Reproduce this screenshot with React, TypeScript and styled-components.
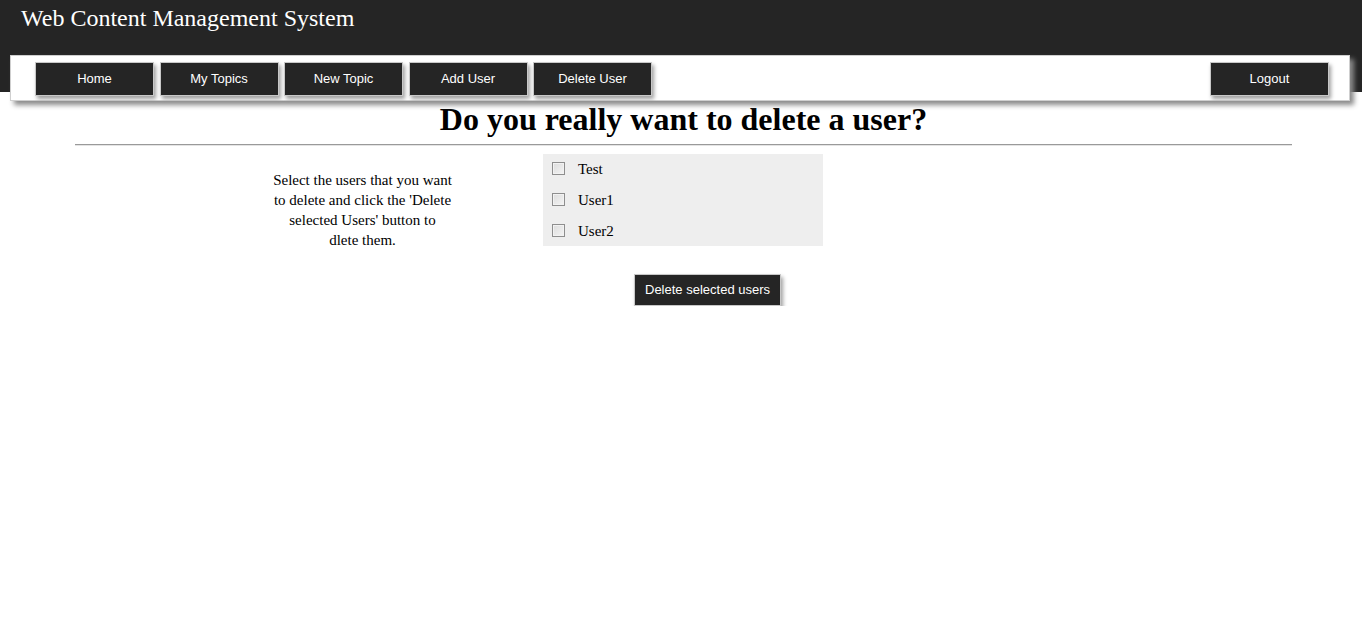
import React from "react";
import styled, { createGlobalStyle } from "styled-components";

const Global = createGlobalStyle`
  html, body { margin: 0; padding: 0; background: #fff; }
  body { font-family: "Liberation Serif", "Times New Roman", serif; color: #000; }
`;

const Header = styled.header`
  background: #252525;
  padding-top: 4px;
  height: 88px;
`;

const SiteTitle = styled.div`
  color: #fff;
  font-family: "Liberation Serif", "Times New Roman", serif;
  font-size: 24px;
  line-height: 28px;
  padding-left: 21px;
`;

const Nav = styled.nav`
  margin: 23px 0 0 10px;
  width: 1340px;
  height: 46px;
  background: #fff;
  border: 1px solid #cfcfcf;
  box-shadow: 4px 4px 5px #8a8a8a;
  display: flex;
  align-items: flex-start;
  gap: 5.5px;
  padding: 6px 20px 0 24px;
  box-sizing: border-box;
  position: relative;
`;

const NavButton = styled.button<{ $push?: boolean }>`
  width: 119px;
  height: 34px;
  background: #252525;
  color: #fff;
  border: 1px solid #c8c8c8;
  box-shadow: 2px 3px 4px #a0a0a0;
  font-family: "Liberation Sans", Arial, sans-serif;
  font-size: 13px;
  line-height: 30px;
  padding: 0 0 1px;
  cursor: pointer;
  margin-left: ${(p) => (p.$push ? "auto" : "0")};
`;

const Main = styled.main`
  padding: 0 70px 0 75px;
`;

const Heading = styled.h1`
  margin: 9px 0 0;
  text-align: center;
  font-family: "Liberation Serif", "Times New Roman", serif;
  font-size: 32px;
  font-weight: bold;
  line-height: 37px;
`;

const Rule = styled.hr`
  margin: 6px 0 0;
  border: none;
  border-top: 1px solid #9a9a9a;
  border-bottom: 1px solid #e4e4e4;
  height: 0;
`;

const Row = styled.div`
  display: flex;
  align-items: flex-start;
  padding-left: 198px;
  gap: 91px;
  margin-top: 8px;
`;

const Instructions = styled.p`
  width: 179px;
  margin: 16px 0 0;
  text-align: center;
  font-size: 15px;
  line-height: 20px;
`;

const UserBox = styled.div`
  width: 280px;
  box-sizing: border-box;
  background: #eeeeee;
  padding: 8px 9px 9px;
  display: flex;
  flex-direction: column;
  gap: 18px;
`;

const UserRow = styled.label`
  display: flex;
  align-items: center;
  height: 13px;
  gap: 13px;
  font-size: 15px;
`;

const Check = styled.input.attrs({ type: "checkbox" })`
  appearance: none;
  -webkit-appearance: none;
  margin: 0;
  width: 13px;
  height: 13px;
  box-sizing: border-box;
  border: 1px solid #8e8e8e;
  background: linear-gradient(135deg, #dcdcdc 0%, #f4f4f4 100%);
  box-shadow: inset 0 0 0 1px #f2f2f2;
  flex: none;
`;

const UserName = styled.span`
  position: relative;
  top: 1px;
`;

const SubmitButton = styled.button`
  display: block;
  margin: 24px 0 0 559px;
  height: 32px;
  padding: 0 10px 1px;
  background: #252525;
  color: #fff;
  border: 1px solid #c8c8c8;
  box-shadow: 2px 3px 4px #a0a0a0;
  font-family: "Liberation Sans", Arial, sans-serif;
  font-size: 13px;
  cursor: pointer;
`;

const users = ["Test", "User1", "User2"];
const navItems = ["Home", "My Topics", "New Topic", "Add User", "Delete User"];

export default function App() {
  return (
    <>
      <Global />
      <Header>
        <SiteTitle>Web Content Management System</SiteTitle>
        <Nav>
          {navItems.map((n) => (
            <NavButton key={n}>{n}</NavButton>
          ))}
          <NavButton $push>Logout</NavButton>
        </Nav>
      </Header>
      <Main>
        <Heading>Do you really want to delete a user?</Heading>
        <Rule />
        <Row>
          <Instructions>
            Select the users that you want to delete and click the 'Delete selected Users' button to dlete them.
          </Instructions>
          <UserBox>
            {users.map((u) => (
              <UserRow key={u}>
                <Check />
                <UserName>{u}</UserName>
              </UserRow>
            ))}
          </UserBox>
        </Row>
        <SubmitButton>Delete selected users</SubmitButton>
      </Main>
    </>
  );
}
